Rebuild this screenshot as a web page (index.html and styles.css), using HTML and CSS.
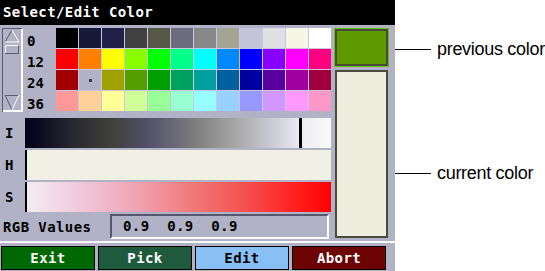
FILE: index.html
```html
<!DOCTYPE html>
<html lang="en">
<head>
  <meta charset="UTF-8" />
  <title>Select/Edit Color</title>
  <link rel="stylesheet" href="styles.css">
</head>
<body>
  <div class="screen">
    <div class="panel">
      <div class="title">Select/Edit Color</div>

      <div class="main">
        <div class="left">
          <div class="palette-row">
            <svg class="scroller" width="21" height="84" viewBox="0 0 21 84">
              <path d="M0.5 84V0.5H20" stroke="#5a5a6e" fill="none"/>
              <path d="M20 1V83H1" stroke="#fff" stroke-width="2" fill="none"/>
              <path d="M3 14L10 2" stroke="#5a5a6e" fill="none"/>
              <path d="M10 2L17 14H3" stroke="#fff" fill="none"/>
              <rect x="3.5" y="17.5" width="13" height="8" fill="none" stroke="#5a5a6e"/>
              <path d="M3.5 25V17.5H16.5" stroke="#fff" fill="none"/>
              <path d="M3 67.5H17" stroke="#5a5a6e"/>
              <path d="M3 67L10 82" stroke="#5a5a6e"/>
              <path d="M17 67L10 82" stroke="#fff"/>
            </svg>
            <div class="row-nums">
              <span>0</span>
              <span>12</span>
              <span>24</span>
              <span>36</span>
            </div>
            <div class="palette">
              <span class="cell" style="background:#000000"></span>
              <span class="cell" style="background:#181838"></span>
              <span class="cell" style="background:#202048"></span>
              <span class="cell" style="background:#404040"></span>
              <span class="cell" style="background:#585848"></span>
              <span class="cell" style="background:#6c6c7c"></span>
              <span class="cell" style="background:#888888"></span>
              <span class="cell" style="background:#a4a494"></span>
              <span class="cell" style="background:#c4c4d8"></span>
              <span class="cell" style="background:#e0e0e4"></span>
              <span class="cell" style="background:#f6f6e6"></span>
              <span class="cell" style="background:#ffffff"></span>

              <span class="cell" style="background:#ff0000"></span>
              <span class="cell" style="background:#ff8000"></span>
              <span class="cell" style="background:#ffff00"></span>
              <span class="cell" style="background:#88ff00"></span>
              <span class="cell" style="background:#00ff00"></span>
              <span class="cell" style="background:#00ff88"></span>
              <span class="cell" style="background:#00ffff"></span>
              <span class="cell" style="background:#0088ff"></span>
              <span class="cell" style="background:#0000ff"></span>
              <span class="cell" style="background:#8800ff"></span>
              <span class="cell" style="background:#ff00ff"></span>
              <span class="cell" style="background:#ff0080"></span>

              <span class="cell" style="background:#a00000"></span>
              <span class="cell cell-empty"></span>
              <span class="cell" style="background:#a0a000"></span>
              <span class="cell" style="background:#55a000"></span>
              <span class="cell" style="background:#00a000"></span>
              <span class="cell" style="background:#00a060"></span>
              <span class="cell" style="background:#00a0a0"></span>
              <span class="cell" style="background:#0060a0"></span>
              <span class="cell" style="background:#0000a0"></span>
              <span class="cell" style="background:#5800a0"></span>
              <span class="cell" style="background:#a000a0"></span>
              <span class="cell" style="background:#a00040"></span>

              <span class="cell" style="background:#ff9898"></span>
              <span class="cell" style="background:#ffd098"></span>
              <span class="cell" style="background:#ffff98"></span>
              <span class="cell" style="background:#d0ff98"></span>
              <span class="cell" style="background:#98ff98"></span>
              <span class="cell" style="background:#98ffd0"></span>
              <span class="cell" style="background:#98ffff"></span>
              <span class="cell" style="background:#98d0ff"></span>
              <span class="cell" style="background:#9898ff"></span>
              <span class="cell" style="background:#d098ff"></span>
              <span class="cell" style="background:#ff98ff"></span>
              <span class="cell" style="background:#ff98c8"></span>
            </div>
          </div>

          <div class="slider slider-first">
            <span class="slider-label">I</span>
            <div class="bar bar-i"><span class="marker marker-wide" style="left:90%"></span></div>
          </div>
          <div class="slider">
            <span class="slider-label">H</span>
            <div class="bar bar-h"><span class="marker" style="left:0%"></span></div>
          </div>
          <div class="slider">
            <span class="slider-label">S</span>
            <div class="bar bar-s"><span class="marker" style="left:0%"></span></div>
          </div>

          <div class="rgb-row">
            <span class="rgb-label">RGB Values</span>
            <div class="rgb-box">0.9&nbsp;&nbsp;0.9&nbsp;&nbsp;0.9</div>
          </div>
        </div>

        <div class="swatches">
          <div class="swatch-prev"></div>
          <div class="swatch-cur"></div>
        </div>
      </div>

      <div class="separator"></div>

      <div class="buttons">
        <button class="btn btn-exit">Exit</button>
        <button class="btn btn-pick">Pick</button>
        <button class="btn btn-edit">Edit</button>
        <button class="btn btn-abort">Abort</button>
      </div>
    </div>

    <div class="notes">
      <div class="note note-prev"><span class="note-line"></span>previous color</div>
      <div class="note note-cur"><span class="note-line"></span>current color</div>
    </div>
  </div>
</body>
</html>
```

FILE: styles.css
```css
* {
  box-sizing: border-box;
}

body {
  margin: 0;
  background: #fff;
  font-family: "DejaVu Sans Mono", monospace;
  font-size: 14px;
  font-weight: bold;
  color: #000;
}

.screen {
  display: flex;
  width: 545px;
  height: 271px;
  overflow: hidden;
}

.panel {
  flex: none;
  width: 395px;
  height: 271px;
  background: #b2b2c6;
}

.title {
  height: 25px;
  line-height: 25px;
  padding-left: 3px;
  background: #000;
  color: #fff;
  letter-spacing: 0.4px;
}

.main {
  display: flex;
  padding-top: 3px;
}

.left {
  width: 329px;
  margin-left: 2px;
}

.palette-row {
  display: flex;
  height: 83px;
}

.scroller {
  flex: none;
  display: block;
}

.row-nums {
  width: 33px;
  padding: 3px 0 0 4px;
  display: flex;
  flex-direction: column;
}

.row-nums span {
  height: 21px;
  line-height: 21px;
}

.palette {
  display: grid;
  grid-template-columns: repeat(12, 22px);
  grid-auto-rows: 20px;
  gap: 1px;
  width: 275px;
  height: 83px;
  background: #c8c8e0;
}

.cell-empty {
  background: #b2b2c6;
  display: flex;
  align-items: center;
  justify-content: center;
}

.cell-empty::after {
  content: "";
  width: 3px;
  height: 3px;
  background: #3c3c4c;
}

.slider {
  display: flex;
  height: 30px;
  margin-top: 2px;
}

.slider-first {
  margin-top: 7px;
}

.slider-label {
  width: 23px;
  padding-left: 3px;
  line-height: 30px;
}

.bar {
  position: relative;
  width: 306px;
}

.bar-i {
  background: linear-gradient(to right, #000018 0%, #262630 15%, #404038 28%, #50506a 40%, #7c7c7c 55%, #a4a4a4 68%, #c8c8d0 80%, #ececf2 90%, #fafafa 100%);
}

.bar-h {
  background: #f0f0e4;
}

.bar-s {
  background: linear-gradient(to right, #f2eef2 0%, #f0c8dc 18%, #f0a0b0 38%, #f07878 55%, #f45050 72%, #ff2020 88%, #ff0000 100%);
}

.marker {
  position: absolute;
  top: 0;
  bottom: 0;
  width: 2px;
  background: #000;
}

.marker-wide {
  width: 3px;
  margin-left: -1px;
}

.rgb-row {
  display: flex;
  align-items: center;
  height: 25px;
  margin-top: 2px;
}

.rgb-label {
  width: 108px;
  padding-left: 1px;
  letter-spacing: 0.4px;
}

.rgb-box {
  width: 219px;
  height: 25px;
  padding-left: 11px;
  line-height: 21px;
  letter-spacing: 0.4px;
  border-style: solid;
  border-width: 2px;
  border-color: #56566e #fff #fff #56566e;
}

.swatches {
  display: flex;
  flex-direction: column;
  margin-left: 3px;
}

.swatch-prev {
  width: 55px;
  height: 39px;
  background: #5c9a00;
  border: 1px solid #6cc000;
  box-shadow: inset 0 0 0 2px #464a3c;
}

.swatch-cur {
  width: 53px;
  height: 168px;
  margin: 3px 0 0 1px;
  background: #eeeede;
  border: 2px solid #4a4a40;
}

.separator {
  height: 2px;
  margin-top: 2px;
  background: #fff;
}

.buttons {
  display: flex;
  gap: 3px;
  margin-top: 3px;
  padding-left: 1px;
}

.btn {
  width: 94px;
  height: 24px;
  padding: 0;
  border: 1px solid #000;
  font-family: "DejaVu Sans Mono", monospace;
  font-size: 14px;
  font-weight: bold;
  letter-spacing: 0.4px;
  line-height: 22px;
  color: #fff;
  text-align: center;
}

.btn-exit {
  background: #006800;
}

.btn-pick {
  background: #1e5a3c;
}

.btn-edit {
  background: #88c0f4;
  color: #000;
}

.btn-abort {
  background: #6c0404;
}

.notes {
  flex: 1;
  display: flex;
  flex-direction: column;
  font-family: "Liberation Sans", sans-serif;
  font-size: 18px;
  font-weight: normal;
  letter-spacing: -0.3px;
}

.note {
  display: flex;
  align-items: center;
  height: 20px;
}

.note-prev {
  margin-top: 39px;
}

.note-cur {
  margin-top: 104px;
}

.note-line {
  width: 36px;
  height: 1px;
  margin-right: 6px;
  background: #000;
}
```
